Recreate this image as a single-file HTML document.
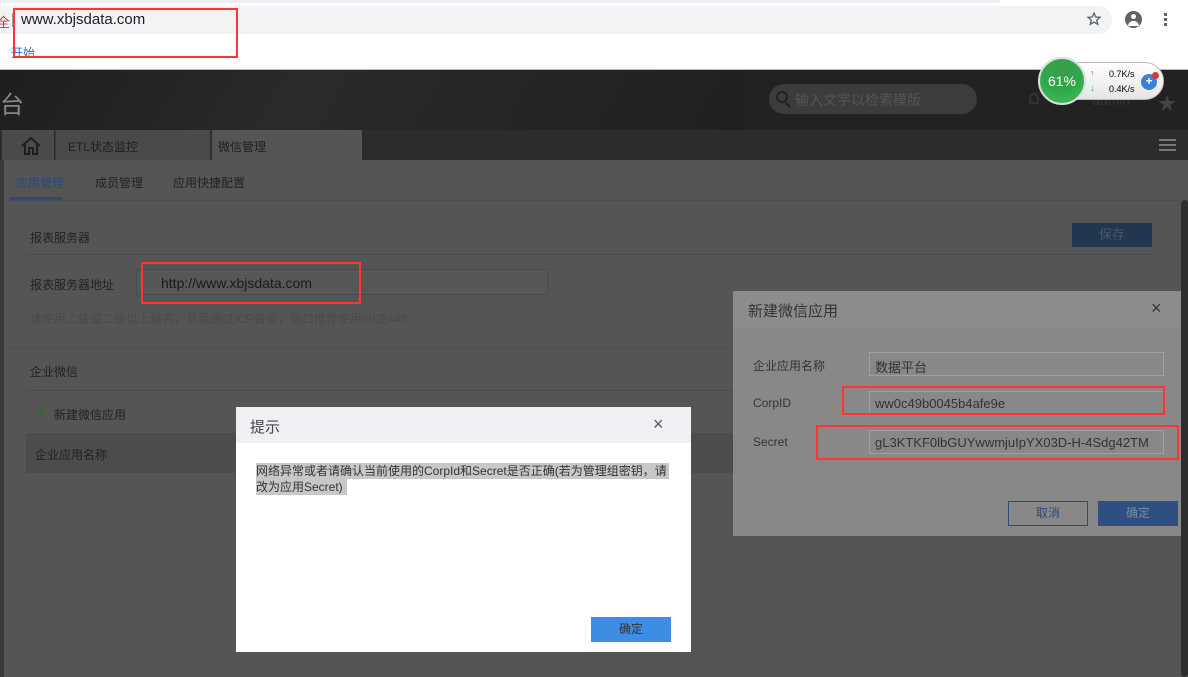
<!DOCTYPE html>
<html><head><meta charset="utf-8"><style>
*{margin:0;padding:0;box-sizing:border-box}
body{width:1188px;height:677px;overflow:hidden;position:relative;background:#555;font-family:"Liberation Sans","Noto Sans CJK SC",sans-serif;font-size:12px;color:#333}
.a{position:absolute}
</style></head><body>
<!-- browser chrome -->
<div class="a" style="left:0;top:0;width:1188px;height:70px;background:#fff;border-bottom:1px solid #bbb"></div>
<div class="a" style="left:0;top:0;width:1000px;height:3px;background:#eceef1"></div>
<div class="a" style="left:0;top:6px;width:1112px;height:28px;background:#f1f3f4;border-radius:0 14px 14px 0"></div>
<div class="a" style="left:-3px;top:12px;color:#c33;font-size:13px">全</div>
<div class="a" style="left:12px;top:13px;width:1px;height:14px;background:#999"></div>
<div class="a" style="left:21px;top:11px;font-size:15px;color:#202124">www.xbjsdata.com</div>
<svg class="a" style="left:1086px;top:11px" width="16" height="16" viewBox="0 0 24 24"><path d="M12 3l2.6 6 6.4.5-4.9 4.2 1.5 6.3L12 16.6 6.4 20l1.5-6.3L3 9.5 9.4 9z" fill="none" stroke="#5f6368" stroke-width="2"/></svg>
<div class="a" style="left:1125px;top:11px;width:17px;height:17px;border-radius:50%;background:#5f6368"></div>
<div class="a" style="left:1131px;top:14px;width:5px;height:5px;border-radius:50%;background:#fff"></div>
<div class="a" style="left:1128px;top:21px;width:11px;height:5px;border-radius:5px 5px 0 0;background:#fff"></div>
<div class="a" style="left:1164px;top:13px;width:3px;height:3px;background:#5f6368;box-shadow:0 5px 0 #5f6368,0 10px 0 #5f6368"></div>
<div class="a" style="left:11px;top:44px;color:#1a73e8;font-size:12px">开始</div>
<div class="a" style="left:13px;top:8px;width:225px;height:50px;border:2px solid #f33"></div>
<!-- app header -->
<div class="a" style="left:0;top:70px;width:1188px;height:60px;background:#222"></div>
<div class="a" style="left:0;top:70px;width:745px;height:60px;background:linear-gradient(120deg,#1e1e1e,#2a2a2a 40%,#202020)"></div>
<div class="a" style="left:0;top:85px;color:#888;font-size:24px">台</div>
<div class="a" style="left:769px;top:84px;width:208px;height:30px;border-radius:15px;background:#3c3c3c;color:#555;font-size:14px;padding:6px 0 0 26px">输入文字以检索模版</div>
<div class="a" style="left:776px;top:91px;width:12px;height:12px;border:2px solid #222;border-radius:50%"></div>
<div class="a" style="left:787px;top:102px;width:2px;height:6px;background:#222;transform:rotate(-45deg)"></div>
<div class="a" style="left:1029px;top:93px;width:10px;height:11px;border:2px solid #333;border-radius:5px 5px 1px 1px"></div>
<div class="a" style="left:1092px;top:92px;color:#333;font-size:14px">admin</div>
<div class="a" style="left:1158px;top:90px;color:#444;font-size:18px">★</div>
<!-- speed widget -->
<div class="a" style="left:1040px;top:62px;width:124px;height:38px;border-radius:19px;background:linear-gradient(#fff,#e5e5e5);border:1px solid #bbb"></div>
<div class="a" style="left:1038px;top:57px;width:48px;height:48px;border-radius:50%;background:radial-gradient(circle at 50% 30%,#3a9b4b,#2fa84a 50%,#45c05a);border:2px solid #ddd;color:#fff;font-size:14px;text-align:center;line-height:44px">61%</div>
<div class="a" style="left:1090px;top:68px;color:#e44;font-size:9px">↑</div>
<div class="a" style="left:1090px;top:83px;color:#2a4;font-size:9px">↓</div>
<div class="a" style="left:1109px;top:69px;font-size:9px;color:#000">0.7K/s</div>
<div class="a" style="left:1109px;top:84px;font-size:9px;color:#000">0.4K/s</div>
<div class="a" style="left:1141px;top:74px;width:16px;height:16px;border-radius:50%;background:#3a7fd8;color:#fff;text-align:center;line-height:15px;font-weight:bold">+</div>
<div class="a" style="left:1152px;top:72px;width:7px;height:7px;border-radius:50%;background:#d33"></div>
<!-- tab bar -->
<div class="a" style="left:0;top:130px;width:1188px;height:30px;background:#2b2c2e"></div>
<div class="a" style="left:2px;top:130px;width:52px;height:30px;background:#4a4a4a"></div>
<svg class="a" style="left:20px;top:136px" width="22" height="20" viewBox="0 0 22 20"><path d="M2 10L11 2l9 8M5 8v10h4v-6h4v6h4V8" fill="none" stroke="#1e1e1e" stroke-width="2"/></svg>
<div class="a" style="left:55px;top:130px;width:130px;height:30px;background:#4a4a4a;border-left:1px solid #3a3a3a;padding:8px 0 0 12px;color:#1e1e1e">ETL状态监控</div>
<div class="a" style="left:185px;top:130px;width:26px;height:30px;background:#4a4a4a;border-right:1px solid #333"></div>
<div class="a" style="left:212px;top:130px;width:150px;height:30px;background:#555;padding:8px 0 0 6px;color:#1e1e1e">微信管理</div>
<div class="a" style="left:1159px;top:139px;width:17px;height:2px;background:#777;box-shadow:0 5px 0 #777,0 10px 0 #777"></div>
<!-- content -->
<div class="a" style="left:0;top:160px;width:4px;height:517px;background:#3a3a3a"></div>
<div class="a" style="left:16px;top:174px;color:#2a4a7a;font-size:12px">应用管理</div>
<div class="a" style="left:10px;top:197px;width:52px;height:3px;background:#2a4a7a"></div>
<div class="a" style="left:95px;top:174px;color:#222">成员管理</div>
<div class="a" style="left:173px;top:174px;color:#222">应用快捷配置</div>
<div class="a" style="left:4px;top:200px;width:1177px;height:1px;background:#4e4e4e"></div>
<div class="a" style="left:1181px;top:200px;width:7px;height:477px;background:#2e2e2e;border-radius:4px"></div>
<div class="a" style="left:30px;top:229px;color:#222">报表服务器</div>
<div class="a" style="left:1072px;top:223px;width:80px;height:24px;background:#233650;color:#48566a;text-align:center;line-height:24px;font-size:13px">保存</div>
<div class="a" style="left:26px;top:254px;width:1126px;height:1px;background:#4a4a4a"></div>
<div class="a" style="left:30px;top:276px;color:#222">报表服务器地址</div>
<div class="a" style="left:136px;top:269px;width:412px;height:26px;border:1px solid #4a4a4a;background:#575757"></div>
<div class="a" style="left:161px;top:275px;font-size:14px;color:#1a1a1a">http://www.xbjsdata.com</div>
<div class="a" style="left:141px;top:262px;width:220px;height:42px;border:2px solid #f33"></div>
<div class="a" style="left:30px;top:310px;color:#4a4a4a">请使用二级或二级以上域名，且需通过ICP备案，端口推荐使用80或443</div>
<div class="a" style="left:4px;top:348px;width:1177px;height:1px;background:#4e4e4e"></div>
<div class="a" style="left:30px;top:363px;color:#222">企业微信</div>
<div class="a" style="left:26px;top:390px;width:1126px;height:1px;background:#4a4a4a"></div>
<div class="a" style="left:37px;top:403px;color:#2a6a2a;font-size:16px;font-weight:bold">+</div>
<div class="a" style="left:54px;top:406px;color:#222">新建微信应用</div>
<div class="a" style="left:26px;top:433px;width:1126px;height:40px;background:#4c4c4c"></div>
<div class="a" style="left:35px;top:446px;color:#222">企业应用名称</div>
<!-- new app dialog -->
<div class="a" style="left:733px;top:291px;width:448px;height:245px;background:#888"></div>
<div class="a" style="left:733px;top:291px;width:448px;height:36px;background:#8b8c8e"></div>
<div class="a" style="left:748px;top:300px;font-size:15px;color:#333">新建微信应用</div>
<div class="a" style="left:1151px;top:298px;font-size:18px;color:#333">×</div>
<div class="a" style="left:753px;top:357px;color:#333">企业应用名称</div>
<div class="a" style="left:869px;top:352px;width:295px;height:24px;border:1px solid #a0a0a0;padding:4px 0 0 5px;font-size:13px;color:#333">数据平台</div>
<div class="a" style="left:753px;top:396px;color:#333">CorpID</div>
<div class="a" style="left:869px;top:391px;width:295px;height:24px;border:1px solid #a0a0a0;padding:4px 0 0 5px;font-size:13px;color:#333">ww0c49b0045b4afe9e</div>
<div class="a" style="left:753px;top:435px;color:#333">Secret</div>
<div class="a" style="left:869px;top:430px;width:295px;height:24px;border:1px solid #a0a0a0;padding:4px 0 0 5px;font-size:13px;color:#333;overflow:hidden;white-space:nowrap">gL3KTKF0lbGUYwwmjuIpYX03D-H-4Sdg42TM</div>
<div class="a" style="left:842px;top:386px;width:323px;height:29px;border:2px solid #f33"></div>
<div class="a" style="left:816px;top:425px;width:363px;height:35px;border:2px solid #f33"></div>
<div class="a" style="left:1008px;top:501px;width:80px;height:25px;border:1px solid #2a4a7a;color:#2a4a7a;text-align:center;line-height:23px">取消</div>
<div class="a" style="left:1098px;top:501px;width:80px;height:25px;background:#2e5080;color:#7a8aa0;text-align:center;line-height:25px">确定</div>
<!-- alert dialog -->
<div class="a" style="left:236px;top:407px;width:455px;height:245px;background:#fff"></div>
<div class="a" style="left:236px;top:407px;width:455px;height:36px;background:#eff0f3"></div>
<div class="a" style="left:250px;top:416px;font-size:15px;color:#444">提示</div>
<div class="a" style="left:653px;top:414px;font-size:18px;color:#555">×</div>
<div class="a" style="left:256px;top:463px;width:413px;height:16px;background:#c8c8c8"></div>
<div class="a" style="left:256px;top:479px;width:91px;height:16px;background:#c8c8c8"></div>
<div class="a" style="left:256px;top:463px;width:415px;line-height:16px;color:#333;font-size:12px">网络异常或者请确认当前使用的CorpId和Secret是否正确(若为管理组密钥，请改为应用Secret)</div>
<div class="a" style="left:591px;top:617px;width:80px;height:25px;background:#3d8de6;color:#333;text-align:center;line-height:25px">确定</div>
</body></html>
